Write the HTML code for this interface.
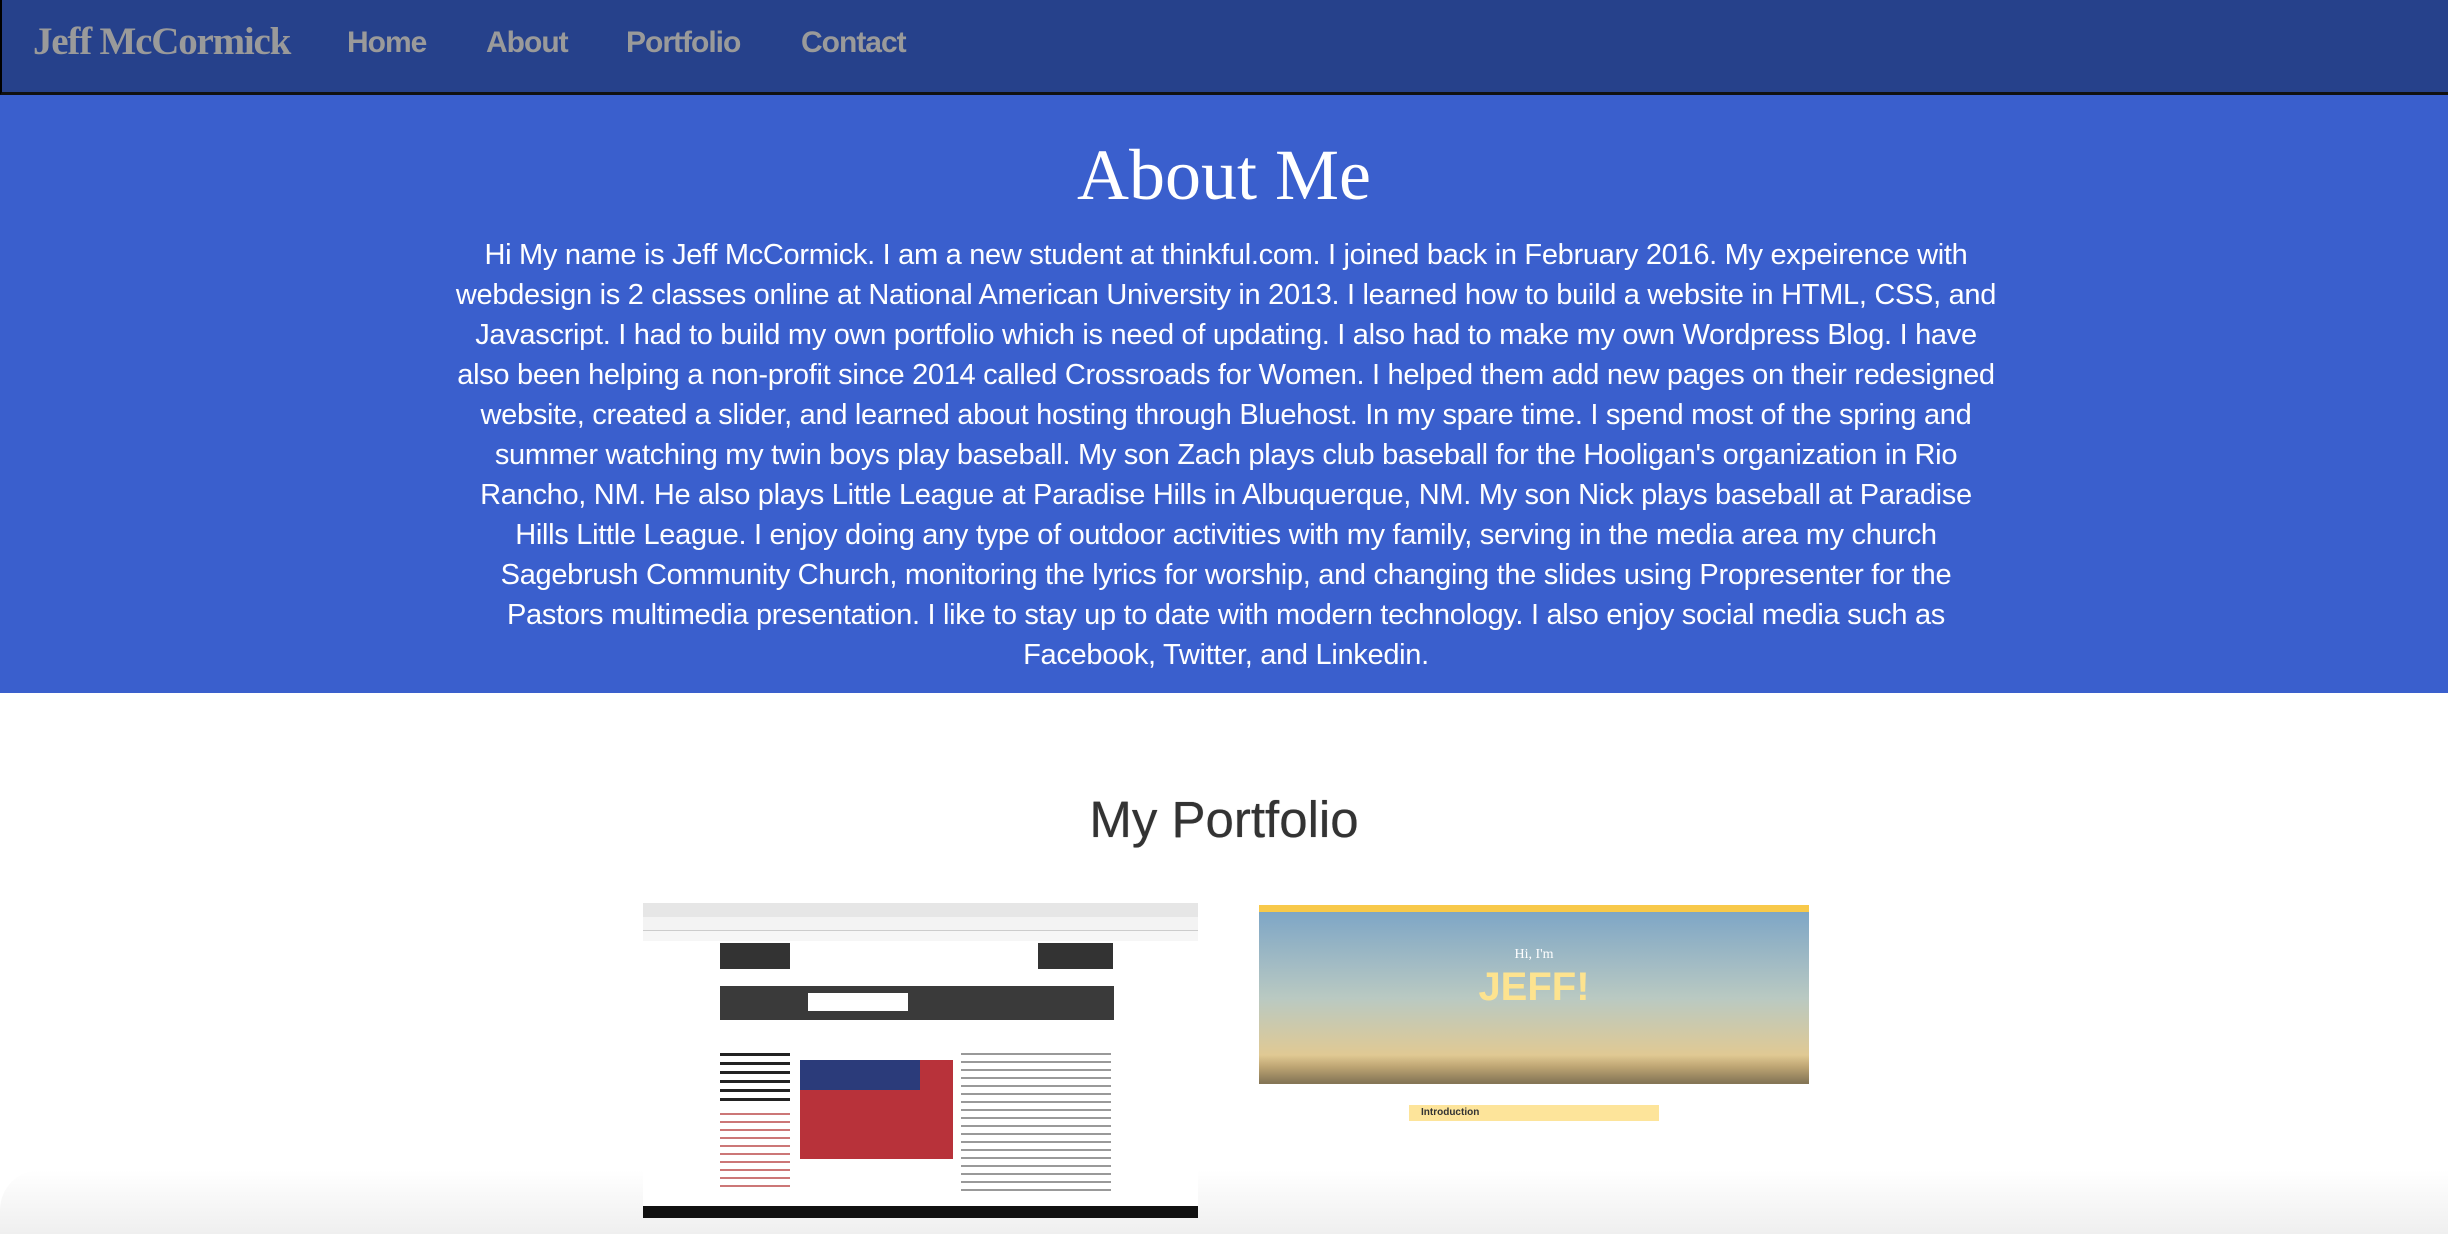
<!DOCTYPE html>
<html><head><meta charset="utf-8">
<style>
*{margin:0;padding:0;box-sizing:border-box}
html,body{width:2448px;height:1234px;overflow:hidden;background:#fff}
body{position:relative;font-family:"Liberation Sans",Arial,sans-serif}
.nav{position:absolute;left:0;top:0;width:2448px;height:95px;background:#26418b;border-left:2px solid #000;border-bottom:3px solid #111}
.brand{position:absolute;left:31px;top:19px;font-family:"Liberation Serif",serif;font-weight:bold;font-size:39px;color:#9a9a9a;letter-spacing:-1.2px}
.nl{position:absolute;top:26px;font-weight:bold;font-size:30px;color:#9a9a9a;letter-spacing:-1px}
.hero{position:absolute;left:0;top:95px;width:2448px;height:598px;background:#3a5fcd}
h1{position:absolute;left:0;width:2448px;top:130px;text-align:center;font-family:"Liberation Serif",serif;font-weight:normal;font-size:72px;color:#fff;line-height:90px}
.p{position:absolute;left:0;top:235px;width:2448px;text-align:center;color:#fff;font-size:29px;line-height:40px;letter-spacing:-0.3px;padding-left:4px}
.p div{white-space:nowrap}
h2{position:absolute;left:0;width:2448px;top:790px;text-align:center;font-weight:normal;font-size:51px;color:#333;text-shadow:0 0 0.6px #333}
.shot1{position:absolute;left:643px;top:903px;width:555px;height:315px;background:#fff;overflow:hidden}
.shot2{position:absolute;left:1259px;top:905px;width:550px;height:219px;background:#fff}
.fade{position:absolute;left:0;top:1170px;width:2448px;height:64px;background:linear-gradient(#fff0,#efefef);border-top-left-radius:40px}
</style></head><body>
<div class="nav">
<div class="brand">Jeff McCormick</div>
<div class="nl" style="left:345px">Home</div>
<div class="nl" style="left:484px">About</div>
<div class="nl" style="left:624px">Portfolio</div>
<div class="nl" style="left:799px">Contact</div>
</div>
<div class="hero"></div>
<h1>About Me</h1>
<div class="p">
<div>Hi My name is Jeff McCormick. I am a new student at thinkful.com. I joined back in February 2016. My expeirence with</div>
<div>webdesign is 2 classes online at National American University in 2013. I learned how to build a website in HTML, CSS, and</div>
<div>Javascript. I had to build my own portfolio which is need of updating. I also had to make my own Wordpress Blog. I have</div>
<div>also been helping a non-profit since 2014 called Crossroads for Women. I helped them add new pages on their redesigned</div>
<div>website, created a slider, and learned about hosting through Bluehost. In my spare time. I spend most of the spring and</div>
<div>summer watching my twin boys play baseball. My son Zach plays club baseball for the Hooligan's organization in Rio</div>
<div>Rancho, NM. He also plays Little League at Paradise Hills in Albuquerque, NM. My son Nick plays baseball at Paradise</div>
<div>Hills Little League. I enjoy doing any type of outdoor activities with my family, serving in the media area my church</div>
<div>Sagebrush Community Church, monitoring the lyrics for worship, and changing the slides using Propresenter for the</div>
<div>Pastors multimedia presentation. I like to stay up to date with modern technology. I also enjoy social media such as</div>
<div>Facebook, Twitter, and Linkedin.</div>
</div>
<h2>My Portfolio</h2>
<div class="fade"></div>
<div class="shot1">
<div style="position:absolute;left:0;top:0;width:555px;height:14px;background:#e6e6e6"></div>
<div style="position:absolute;left:0;top:14px;width:555px;height:14px;background:#f3f3f3;border-bottom:1px solid #ccc"></div>
<div style="position:absolute;left:0;top:28px;width:555px;height:10px;background:#f6f6f6"></div>
<div style="position:absolute;left:77px;top:40px;width:70px;height:26px;background:#333"></div>
<div style="position:absolute;left:395px;top:40px;width:75px;height:26px;background:#333"></div>
<div style="position:absolute;left:77px;top:83px;width:394px;height:34px;background:#3a3a3a"></div>
<div style="position:absolute;left:165px;top:90px;width:100px;height:18px;background:#fff"></div>
<div style="position:absolute;left:157px;top:157px;width:153px;height:99px;background:#b8323a"></div>
<div style="position:absolute;left:157px;top:157px;width:120px;height:30px;background:#2b3b7a"></div>
<div style="position:absolute;left:77px;top:150px;width:70px;height:50px;background:repeating-linear-gradient(#222 0 3px,#fff 3px 9px)"></div>
<div style="position:absolute;left:77px;top:210px;width:70px;height:80px;background:repeating-linear-gradient(#c77 0 2px,#fff 2px 8px)"></div>
<div style="position:absolute;left:318px;top:150px;width:150px;height:140px;background:repeating-linear-gradient(#999 0 2px,#fff 2px 8px)"></div>
<div style="position:absolute;left:0;top:303px;width:555px;height:12px;background:#111"></div>
</div>
<div class="shot2">
<div style="position:absolute;left:0;top:0;width:550px;height:7px;background:#f8c94a"></div>
<div style="position:absolute;left:0;top:7px;width:550px;height:172px;background:linear-gradient(#7ea6c6,#b9c9c2 50%,#e8c98a 90%)"></div>
<div style="position:absolute;left:0;top:150px;width:550px;height:29px;background:linear-gradient(transparent,#222 95%);opacity:.5"></div>
<div style="position:absolute;left:0;top:42px;width:550px;text-align:center;font-family:'Liberation Serif',serif;color:#fff;font-size:14px">Hi, I'm</div>
<div style="position:absolute;left:0;top:60px;width:550px;text-align:center;color:#fde38f;font-weight:bold;font-size:40px">JEFF!</div>
<div style="position:absolute;left:150px;top:200px;width:250px;height:16px;background:#fde49a;font-size:10px;font-weight:bold;padding:2px 12px;color:#333">Introduction</div>
</div>
</body></html>
